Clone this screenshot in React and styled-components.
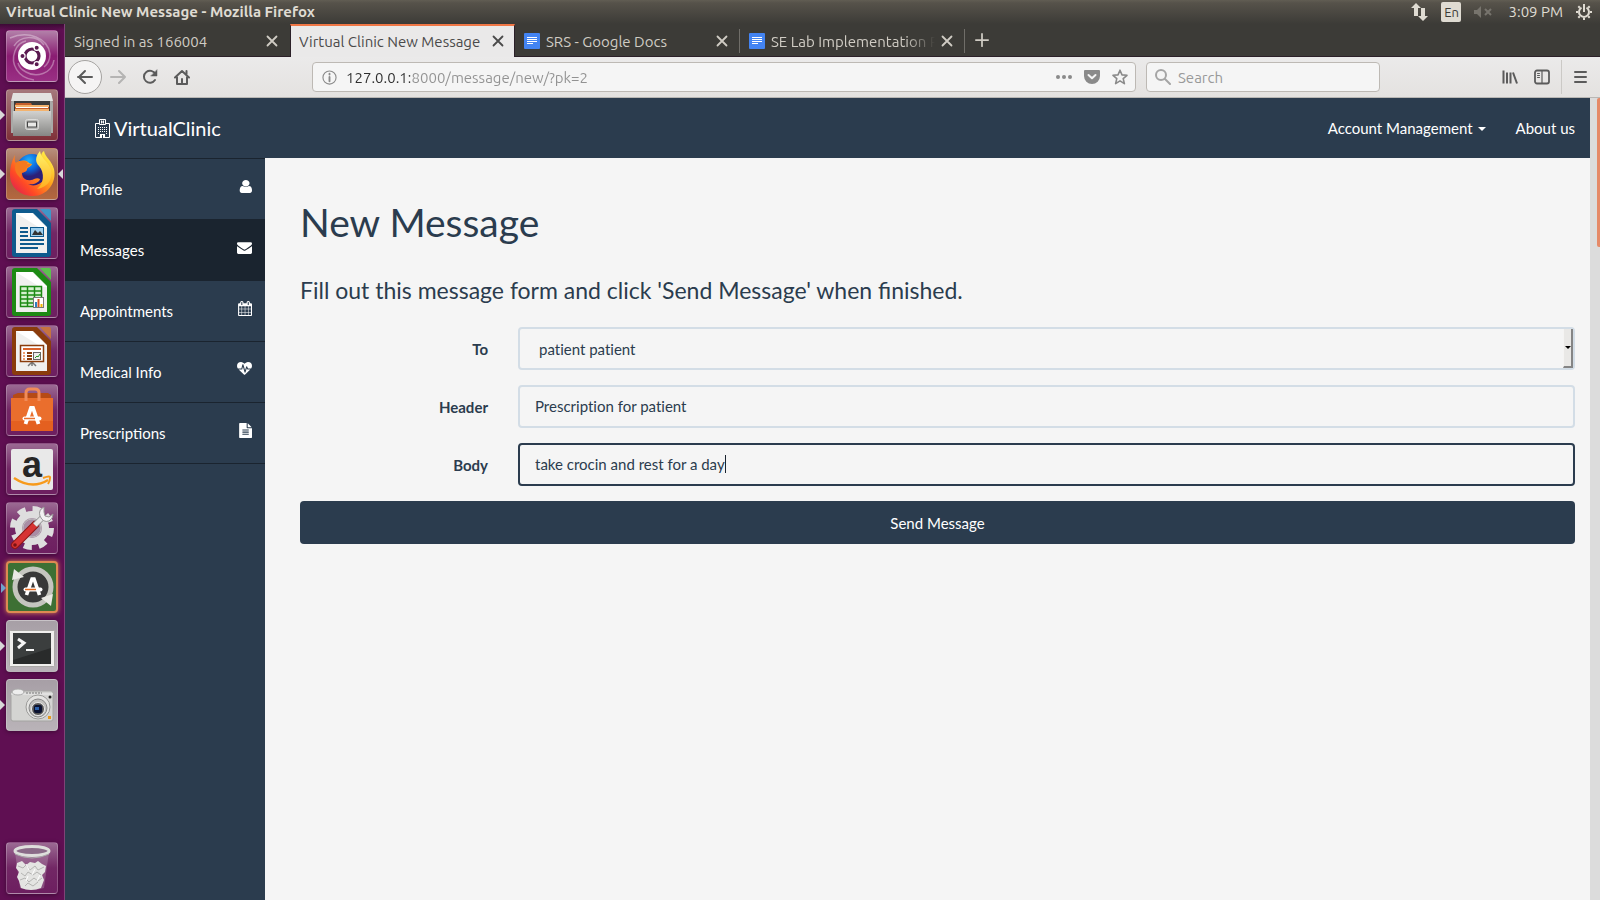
import React from "react";
import styled, { createGlobalStyle, css } from "styled-components";

const navy = "#2b3c4e";
const uiFont = `Ubuntu, "Noto Sans", sans-serif`;
const webFont = `Lato, "Liberation Sans", sans-serif`;

const GlobalStyle = createGlobalStyle`
  *, *::before, *::after { box-sizing: border-box; }
  body { margin: 0; background: #f5f5f5; font-family: ${uiFont}; }
  button, input, select { font: inherit; color: inherit; margin: 0; }
  svg { display: block; flex: none; }
`;

const Desktop = styled.div`
  min-height: 100vh;
  display: flex;
  flex-direction: column;
`;

/* Top panel */
const Panel = styled.header`
  height: 24px;
  flex: none;
  display: flex;
  align-items: center;
  justify-content: space-between;
  padding: 0 8px 0 6px;
  background: linear-gradient(#615d53, #56524a 3px, #3c3b37);
  color: #dfdbd2;
`;
const PanelTitle = styled.div`
  font-size: 15px;
  font-weight: 700;
  line-height: 24px;
  white-space: nowrap;
`;
const Indicators = styled.div`
  display: flex;
  align-items: center;
  font-size: 15px;
  line-height: 24px;
`;
const Language = styled.span`
  width: 20px;
  height: 20px;
  margin: 0 13px 0 13px;
  border-radius: 2px;
  background: #dfdbd2;
  color: #3c3b37;
  font-size: 13px;
  line-height: 20px;
  text-align: center;
`;
const Clock = styled.time`
  margin: 0 13px 0 16px;
`;

const Workspace = styled.div`
  flex: 1;
  display: flex;
`;

/* Launcher */
const Launcher = styled.nav`
  width: 65px;
  flex: none;
  display: flex;
  flex-direction: column;
  gap: 7px;
  padding: 6px 6px;
  background: linear-gradient(#3c0a35, #5f0f52 6px, #5f0f52);
  border-right: 1px solid #7f4377;
`;
const Tile = styled.button`
  position: relative;
  width: 52px;
  height: 52px;
  flex: none;
  padding: 0;
  border: 1px solid rgba(255, 255, 255, 0.22);
  border-radius: 4px;
  background: ${(p) => p.$bg || "linear-gradient(#9b6a93, #722765 50%, #6d1f60)"};
  box-shadow: 0 1px 4px rgba(0, 0, 0, 0.35);
  ${(p) => p.$last && css`margin-top: auto;`}
  ${(p) =>
    p.$glow &&
    css`
      border: 2px solid #dd8a52;
      box-shadow: 0 0 5px #e08a50;
    `}
  & > svg {
    position: absolute;
    inset: ${(p) => (p.$glow ? "-2px" : "-1px")};
  }
`;
const Pip = styled.span`
  position: absolute;
  top: 20px;
  ${(p) => (p.$right ? "right: -6px;" : "left: -7px;")}
  border: 5px solid transparent;
  ${(p) =>
    p.$right
      ? "border-left-width: 0; border-right-color: #d8d8d8;"
      : `border-right-width: 0; border-left-color: ${p.$blue ? "#6fa3cc" : "#d8d8d8"};`}
`;

/* Browser */
const Browser = styled.div`
  flex: 1;
  min-width: 0;
  display: flex;
  flex-direction: column;
`;
const TabStrip = styled.div`
  height: 33px;
  flex: none;
  display: flex;
  align-items: stretch;
  background: #3c3b37;
  border-bottom: 1px solid #2b2028;
`;
const Tab = styled.div`
  width: 225px;
  position: relative;
  display: flex;
  align-items: center;
  gap: 6px;
  padding: 2px 12px 0 9px;
  color: #d0ccc4;
  ${(p) =>
    p.$active &&
    css`
      margin-bottom: -1px;
      padding: 0 10px 1px 8px;
      border-top: 2px solid #f07746;
      border-left: 1px solid #2b2028;
      border-right: 1px solid #2b2028;
      background: #eae9e9;
      color: #4a4a4a;
    `}
  ${(p) =>
    p.$divided &&
    css`
      &::after {
        content: "";
        position: absolute;
        right: 0;
        top: 5px;
        bottom: 3px;
        width: 1px;
        background: #706e69;
      }
    `}
`;
const TabLabel = styled.span`
  flex: 1;
  min-width: 0;
  overflow: hidden;
  white-space: nowrap;
  font-size: 15px;
  line-height: 21px;
  ${(p) =>
    p.$fade &&
    css`
      mask-image: linear-gradient(to right, #000 calc(100% - 30px), transparent);
    `}
`;
const IconButton = styled.button`
  display: flex;
  align-items: center;
  justify-content: center;
  width: ${(p) => p.$w || 32}px;
  height: ${(p) => p.$h || 32}px;
  flex: none;
  padding: 0;
  border: 0;
  background: none;
  color: ${(p) => p.$color || "inherit"};
  ${(p) =>
    p.$round &&
    css`
      border: 1px solid #a5a3a1;
      border-radius: 50%;
      background: #f5f4f4;
    `}
`;
const Toolbar = styled.div`
  height: 41px;
  flex: none;
  display: flex;
  align-items: center;
  padding: 0 4px 0 3px;
  background: linear-gradient(#ebeaea, #e4e2e0);
  border-bottom: 1px solid #b9b7b4;
  color: #5b5b5b;
`;
const Field = styled.label`
  height: 30px;
  display: flex;
  align-items: center;
  border: 1px solid #bdb9b4;
  border-radius: 4px;
  background: #f5f5f5;
  color: #8a8a8a;
`;
const UrlField = styled(Field)`
  flex: 1;
  margin-left: 114px;
  padding: 0 1px 0 9px;
`;
const SearchField = styled(Field)`
  width: 234px;
  margin: 0 114px 0 10px;
  padding: 0 8px;
  gap: 7px;
`;
const BareInput = styled.input`
  flex: 1;
  min-width: 0;
  padding: 0;
  border: 0;
  outline: 0;
  background: none;
  font-size: 15px;
  line-height: 21px;
  &::placeholder { color: #999; opacity: 1; }
`;
const UrlInput = styled(BareInput)`
  margin-left: 9px;
  color: transparent;
  background: linear-gradient(to right, #2e2e2e 64px, #929292 64px);
  background-clip: text;
  -webkit-background-clip: text;
`;
const ToolDivider = styled.span`
  width: 1px;
  height: 34px;
  margin: 0 2px 0 3px;
  background: #cbc9c6;
`;

/* Web page */
const Viewport = styled.div`
  flex: 1;
  display: flex;
`;
const Scrollbar = styled.div`
  width: 10px;
  flex: none;
  padding-left: 7px;
  background: #dcdcdc;
  &::before {
    content: "";
    display: block;
    height: 149px;
    background: #e58a68;
    border-radius: 2px 0 0 2px;
  }
`;
const Page = styled.div`
  flex: 1;
  min-width: 0;
  display: flex;
  flex-direction: column;
  background: #f5f5f5;
  color: ${navy};
  font-family: ${webFont};
  font-size: 15px;
  line-height: 21px;
`;
const Navbar = styled.nav`
  height: 60px;
  flex: none;
  display: flex;
  align-items: center;
  padding: 0 15px 0 30px;
  background: ${navy};
  color: #fff;
`;
const Brand = styled.a`
  display: flex;
  align-items: center;
  gap: 4px;
  margin-right: auto;
  color: inherit;
  text-decoration: none;
  font-size: 20px;
`;
const NavLink = styled.a`
  display: flex;
  align-items: center;
  gap: 5px;
  margin-left: 30px;
  color: inherit;
  text-decoration: none;
`;
const Caret = styled.span`
  border: 4px solid transparent;
  border-top-color: currentColor;
  border-bottom: 0;
  margin-top: 2px;
`;
const Columns = styled.div`
  flex: 1;
  display: flex;
`;
const Sidebar = styled.aside`
  width: 200px;
  flex: none;
  background: ${navy};
  border-top: 1px solid #1a242f;
`;
const SideLink = styled.a`
  display: flex;
  align-items: center;
  justify-content: space-between;
  height: 61px;
  padding: 0 13px 0 15px;
  border-bottom: 1px solid #1a242f;
  background: ${(p) => (p.$active ? "#1a242f" : "transparent")};
  color: #fff;
  text-decoration: none;
  & svg { margin-bottom: 5px; }
`;
const Main = styled.main`
  flex: 1;
  min-width: 0;
  padding: 42px 15px 42px 35px;
`;
const Title = styled.h1`
  margin: 0 0 33px;
  font-size: 39px;
  font-weight: 400;
  line-height: 44px;
`;
const Lead = styled.h2`
  margin: 0 0 24px;
  font-size: 23px;
  font-weight: 400;
  line-height: 26px;
`;
const Form = styled.form`
  display: grid;
  gap: 15px;
`;
const Row = styled.div`
  display: grid;
  grid-template-columns: 188px 1fr;
  column-gap: 30px;
  align-items: center;
`;
const RowLabel = styled.label`
  padding-top: 2px;
  text-align: right;
  font-weight: 700;
`;
const Control = styled.div`
  position: relative;
`;
const boxed = css`
  display: block;
  width: 100%;
  height: 43px;
  border: 2px solid ${(p) => (p.$focused ? navy : "#d3dde6")};
  border-radius: 4px;
  outline: 0;
  background: #f5f5f5;
  font-size: 15px;
  line-height: 21px;
  font-variant-ligatures: none;
`;
const TextBox = styled.input`
  ${boxed}
  padding: 8px 15px 10px;
`;
const Select = styled.select`
  ${boxed}
  appearance: none;
  padding: 10px 19px 8px;
`;
const SelectArrow = styled.span`
  position: absolute;
  top: 2px;
  right: 2px;
  bottom: 2px;
  width: 10px;
  display: flex;
  align-items: center;
  justify-content: center;
  border-right: 2px solid #858585;
  border-bottom: 2px solid #858585;
  border-left: 1px solid #f5f4f3;
  background: #e9e8e6;
  pointer-events: none;
  &::before {
    content: "";
    border: 3px solid transparent;
    border-top-color: #000;
    border-bottom: 0;
  }
`;
const TextCursor = styled.span`
  position: absolute;
  top: 12px;
  left: 207px;
  width: 1px;
  height: 18px;
  background: #1a242f;
`;
const Submit = styled.button`
  height: 43px;
  padding: 2px 15px 0;
  border: 0;
  border-radius: 4px;
  background: ${navy};
  color: #fff;
`;

/* Icons */
const Line = ({ size = 16, w = 2, children, ...rest }) => (
  <svg width={size} height={size} viewBox="0 0 16 16" fill="none" stroke="currentColor" strokeWidth={w} strokeLinecap="round" strokeLinejoin="round" aria-hidden="true" {...rest}>
    {children}
  </svg>
);
const CloseIcon = () => (
  <Line size={12} w={2.4}><path d="M2 2l12 12M14 2L2 14" /></Line>
);
const DocsIcon = () => (
  <svg width="16" height="16" viewBox="0 0 16 16" aria-hidden="true">
    <rect width="16" height="16" rx="1" fill="#4384f3" />
    <path d="M3 4.5h10M3 6.5h10M3 8.5h10M3 10.5h6" stroke="#fff" />
  </svg>
);

const glyphs = {
  user: ["-25 0 1561 1792", "M1536 1399q0 109-62.5 187t-150.5 78h-854q-88 0-150.5-78t-62.5-187q0-85 8.5-160.5t31.5-152 58.5-131 94-89 134.5-34.5q131 128 313 128t313-128q76 0 134.5 34.5t94 89 58.5 131 31.5 152 8.5 160.5zm-256-887q0 159-112.5 271.5t-271.5 112.5-271.5-112.5-112.5-271.5 112.5-271.5 271.5-112.5 271.5 112.5 112.5 271.5z"],
  envelope: ["0 0 1792 1792", "M1792 710v794q0 66-47 113t-113 47h-1472q-66 0-113-47t-47-113v-794q44 49 101 87 362 246 497 345 57 42 92.5 65.5t94.5 48 110 24.5h2q51 0 110-24.5t94.5-48 92.5-65.5q170-123 498-345 57-39 100-87zm0-294q0 79-49 151t-122 123q-376 261-468 325-10 7-42.5 31t-54 38.5-52 32.5-57.5 27-50 9h-2q-23 0-50-9t-57.5-27-52-32.5-54-38.5-42.5-31q-91-64-262-182.5t-205-142.5q-62-42-117-115.5t-55-136.5q0-78 41.5-130t118.5-52h1472q65 0 112.5 47t47.5 113z"],
  calendar: ["-64 0 1792 1792", "M192 1664h288v-288h-288v288zm352 0h320v-288h-320v288zm-352-352h288v-320h-288v320zm352 0h320v-320h-320v320zm-352-384h288v-288h-288v288zm736 736h320v-288h-320v288zm-384-736h320v-288h-320v288zm768 736h288v-288h-288v288zm-384-352h320v-320h-320v320zm-352-864v-288q0-13-9.5-22.5t-22.5-9.5h-64q-13 0-22.5 9.5t-9.5 22.5v288q0 13 9.5 22.5t22.5 9.5h64q13 0 22.5-9.5t9.5-22.5zm736 864h288v-320h-288v320zm-384-384h320v-288h-320v288zm384 0h288v-288h-288v288zm32-480v-288q0-13-9.5-22.5t-22.5-9.5h-64q-13 0-22.5 9.5t-9.5 22.5v288q0 13 9.5 22.5t22.5 9.5h64q13 0 22.5-9.5t9.5-22.5zm384-64v1280q0 52-38 90t-90 38h-1408q-52 0-90-38t-38-90v-1280q0-52 38-90t90-38h128v-96q0-66 47-113t113-47h64q66 0 113 47t47 113v96h384v-96q0-66 47-113t113-47h64q66 0 113 47t47 113v96h128q52 0 90 38t38 90z"],
  heartbeat: ["0 0 1792 1792", "M1280 896h305q-5 6-10 10.5t-9 7.5l-3 4-623 600q-18 18-44 18t-44-18l-624-602q-5-2-21-20h369q22 0 39.5-13.5t22.5-34.5l70-281 190 667q6 20 23 33t39 13q21 0 38-13t23-33l146-485 56 112q18 35 57 35zm512-428q0 145-103 300h-369l-111-221q-8-17-25.5-27t-36.5-8q-45 5-56 46l-129 430-196-686q-6-20-23.5-33t-39.5-13-39 13.5-22 34.5l-116 464h-423q-103-155-103-300 0-220 127-344t351-124q62 0 126.5 21.5t120 58 95.5 68.5 76 68q36-36 76-68t95.5-68.5 120-58 126.5-21.5q224 0 351 124t127 344z"],
  file: ["-128 0 1792 1792", "M1596 476q14 14 28 36h-472v-472q22 14 36 28zm-476 164h544v1056q0 40-28 68t-68 28h-1344q-40 0-68-28t-28-68v-1600q0-40 28-68t68-28h800v544q0 40 28 68t68 28zm160 736v-64q0-14-9-23t-23-9h-704q-14 0-23 9t-9 23v64q0 14 9 23t23 9h704q14 0 23-9t9-23zm0-256v-64q0-14-9-23t-23-9h-704q-14 0-23 9t-9 23v64q0 14 9 23t23 9h704q14 0 23-9t9-23zm0-256v-64q0-14-9-23t-23-9h-704q-14 0-23 9t-9 23v64q0 14 9 23t23 9h704q14 0 23-9t9-23z"],
};
const Glyph = ({ name }) => (
  <svg width="15" height="15" viewBox={glyphs[name][0]} preserveAspectRatio="none" fill="currentColor" aria-hidden="true">
    <path d={glyphs[name][1]} />
  </svg>
);
const HospitalIcon = () => (
  <svg width="15" height="19" viewBox="0 0 15 19" fill="none" stroke="#fff" aria-hidden="true">
    <path d="M4.5 4.5h-4v14h14v-14h-4" />
    <path d="M4.5 5.500V.5h6v5z" />
    <path d="M6.500 1.500v3M8.500 1.500v3M6.500 3h2" />
    <path d="M3 8.500h9M3 10.500h9M3 12.500h9" strokeDasharray="1 1" />
    <path d="M3 14.500h1M11 14.500h1" />
    <path d="M5 19v-4h5v4z" fill="#fff" stroke="none" />
    <path d="M7 16h1v3H7z" fill={navy} stroke="none" />
  </svg>
);

const Art = ({ children }) => (
  <svg width="52" height="52" viewBox="0 0 52 52" aria-hidden="true">{children}</svg>
);
const UbuntuArt = () => (
  <Art>
    <g fill="none" stroke="#fff" strokeOpacity=".35" strokeWidth="1.5">
      <path d="M4 8c18-8 38 0 40 16 0 6-2 10-6 13" />
      <path d="M48 30C46 44 30 48 20 42c-4-2-7-5-8-9" />
      <path d="M28 50C12 48 4 34 9 21c2-5 6-9 11-10" />
      <path d="M8 16C14 6 30 4 38 15" />
    </g>
    <circle cx="26" cy="26" r="14" fill="#fff" />
    <circle cx="26" cy="26" r="7" fill="none" stroke="#5a1a50" strokeWidth="3.200" />
    <g stroke="#fff" strokeWidth="1.200" fill="#5a1a50">
      <circle cx="16.500" cy="26" r="2.600" /><circle cx="30.700" cy="17.800" r="2.600" /><circle cx="30.700" cy="34.200" r="2.600" />
    </g>
  </Art>
);
const FilesArt = () => (
  <Art>
    <defs><linearGradient id="cab" x2="0" y2="1"><stop stopColor="#d2d2d0" /><stop offset="1" stopColor="#868684" /></linearGradient></defs>
    <path d="M7 5h38l2 9v30H5V14z" fill="#a9a9a7" />
    <path d="M7 4h38l2 8H5z" fill="#e2e2e0" />
    <path d="M8 12h36v10H8z" fill="#3b3b3b" />
    <path d="M10 14h15l1 2h17v6H9v-6z" fill="#c65f2c" />
    <path d="M9 17h34M9 21h34" stroke="#f3b36e" strokeWidth="2" />
    <path d="M10 18.500h32" stroke="#fff" />
    <path d="M7 22h38v25H7z" fill="url(#cab)" />
    <rect x="19.500" y="30.500" width="13" height="10" rx="2" fill="#b8b8b6" stroke="#dcdcda" />
    <rect x="21.500" y="33" width="9" height="5" fill="#e9e9e7" stroke="#444" />
  </Art>
);
const FirefoxArt = () => (
  <Art>
    <defs>
      <linearGradient id="fx" x1="1" x2="0" y1="0" y2="1"><stop offset=".1" stopColor="#fff24a" /><stop offset=".4" stopColor="#ffa51c" /><stop offset=".7" stopColor="#ff4a25" /><stop offset="1" stopColor="#d5125f" /></linearGradient>
      <radialGradient id="globe" cx=".4" cy=".2"><stop stopColor="#1fb0ff" /><stop offset=".6" stopColor="#0a62d8" /><stop offset="1" stopColor="#2b1f78" /></radialGradient>
      <linearGradient id="fxt" x2="0" y2="1"><stop stopColor="#fff36a" /><stop offset="1" stopColor="#ffb01e" /></linearGradient>
    </defs>
    <circle cx="26" cy="22" r="16" fill="url(#globe)" />
    <path d="M9 7c-1 4 0 7 1 8 4-3 9-3 12-1 1 1 3 2 4 2-1 3-4 3-5 5 0 3-3 3-5 4 0 5 4 8 9 7 3 0 5-3 9-1-1 4-7 6-12 5 7 4 17-1 18-10 1-8-5-11-5-17 0-3 1-5 3-6 1 6 8 10 10 18 3 14-7 27-21 27C14 48 4 39 4 27 4 17 7 11 9 7z" fill="url(#fx)" />
    <path d="M34 3c-5 6-5 11-1 15 6 7 5 18-2 23 12-2 16-11 14-19-2-8-10-11-11-19z" fill="url(#fxt)" />
    <path d="M10 15c4-3 9-2 12-1-2 3-1 2 3 2-1 3-5 3-6 6-3 1-5 4-3 9-5-3-9-10-6-16z" fill="#f4791f" />
  </Art>
);
const OfficeArt = ({ color, light, children }) => (
  <Art>
    <path d="M9 2h19l17 17v28q0 3-3 3H9q-3 0-3-3V5q0-3 3-3z" fill={color} />
    <path d="M10 6h17l14 14v26H10z" fill="#f0f0ef" />
    <path d="M10 6h16l15 15h-7z" fill="#fff" />
    <path d="M34 2h9q2 0 2 2v10z" fill={light} />
    <path d="M27 2h4l14 14v5z" fill={color} />
    {children}
  </Art>
);
const WriterArt = () => (
  <OfficeArt color="#0e5a8d" light="#3f96c8">
    <path d="M14 21h8M14 25h8M14 29h8M14 33h24M14 37h24M14 41h18" stroke="#0e5a8d" strokeWidth="2" />
    <rect x="24.500" y="20.500" width="13" height="9" fill="#9fd0ee" stroke="#0e5a8d" />
    <path d="M26 28l3-5 3 3 2-2 3 4z" fill="#333" />
  </OfficeArt>
);
const CalcArt = () => (
  <OfficeArt color="#1d8a14" light="#5dc14f">
    <rect x="14" y="20" width="22" height="21" fill="#d6f0cf" />
    <path d="M14.500 20.500h21v20h-21zM14 25h22M14 29h22M14 33h22M14 37h22M21.500 20v21M28.500 20v21" fill="none" stroke="#1d8a14" strokeWidth="1.500" />
    <rect x="27.500" y="31.500" width="10" height="10" fill="#fff" stroke="#777" />
    <path d="M30 41v-5" stroke="#2d7ec0" strokeWidth="2" /><path d="M32.500 41v-8" stroke="#d9541e" strokeWidth="2" /><path d="M35.500 41v-3" stroke="#f0b400" strokeWidth="2" />
  </OfficeArt>
);
const ImpressArt = () => (
  <OfficeArt color="#8a3c0c" light="#c57340">
    <path d="M22 41l4-4 4 4M26 37v4" stroke="#777" strokeWidth="1.500" fill="none" />
    <rect x="14.500" y="20.500" width="23" height="16" fill="#fff" stroke="#8a3c0c" strokeWidth="1.500" />
    <path d="M17 24h18" stroke="#d9622b" strokeWidth="2" />
    <path d="M17 28h2M17 31h2M17 34h2" stroke="#f0a070" strokeWidth="2" /><path d="M21 28h5M21 31h5M21 34h5" stroke="#8a3c0c" strokeWidth="2" />
    <rect x="27.500" y="27.500" width="7" height="7" fill="#eee" stroke="#666" /><path d="M29 33l2-2 1 1 2-3" stroke="#279a27" fill="none" />
  </OfficeArt>
);
const BagArt = () => (
  <Art>
    <path d="M7 11l5-2h30l3 2v3H7z" fill="#b64a15" />
    <path d="M5 14h42v33H5z" fill="#ea6e2d" /><path d="M5 37h42v10H5z" fill="#e46020" />
    <path d="M20 17V9q0-4 4-4h5q4 0 4 4v8" fill="none" stroke="#f08b5a" strokeWidth="3" />
    <path d="M19.500 40l5.500-16h2l5.500 16" fill="none" stroke="#fff" strokeWidth="3.800" />
    <path d="M18.500 34.500h15" stroke="#fff" strokeWidth="4" strokeLinecap="round" /><path d="M18 34.500h11" stroke="#ea6e2d" strokeWidth="1.500" />
  </Art>
);
const AmazonArt = () => (
  <Art>
    <rect x="5" y="6" width="42" height="41" rx="2" fill="#e9e9e9" />
    <text x="26" y="34" textAnchor="middle" fontFamily="Liberation Sans, sans-serif" fontWeight="700" fontSize="36" fill="#262626">a</text>
    <path d="M8 35q18 12 34 2" fill="none" stroke="#f79a1c" strokeWidth="2.500" /><path d="M37 35q8-3 7 0 0 3-2 6" fill="none" stroke="#f79a1c" strokeWidth="2" />
  </Art>
);
const SettingsArt = () => (
  <Art>
    <circle cx="26" cy="26" r="19" fill="none" stroke="#dedede" strokeWidth="6" strokeDasharray="8 6.920" />
    <circle cx="26" cy="26" r="13.500" fill="#a98da5" stroke="#dedede" strokeWidth="7" />
    <circle cx="26" cy="26" r="9" fill="none" stroke="#bcbcbc" />
    <path d="M9 43l20-20" stroke="#8e1616" strokeWidth="8" strokeLinecap="round" />
    <path d="M9 43l20-20" stroke="#d63333" strokeWidth="6" strokeLinecap="round" />
    <path d="M29 23l8-8" stroke="#8f8f8f" strokeWidth="6" />
    <path d="M29 23l8-8" stroke="#e6e6e6" strokeWidth="4.500" />
    <path d="M38 5q-6 3-4 9 3 7 9 5 4-2 4-7l-4 3-4-1-1-4z" fill="#f2f2f2" stroke="#979797" />
    <circle cx="9" cy="43" r="1.800" fill="#7a1212" />
  </Art>
);
const UpdaterArt = () => (
  <Art>
    <circle cx="27" cy="26" r="16" fill="#383838" />
    <circle cx="27" cy="26" r="18" fill="none" stroke="#c5c5bf" strokeWidth="5" />
    <path d="M6 19l2-11 10 8zM47 33l-2 12-10-8z" fill="#e9e9e4" />
    <path d="M20.500 34l5.500-16h2l5.500 16" fill="none" stroke="#fff" strokeWidth="3.600" />
    <path d="M19.500 28.500h15" stroke="#fff" strokeWidth="4" strokeLinecap="round" /><path d="M19 28.500h11" stroke="#e56a20" strokeWidth="1.500" />
  </Art>
);
const TerminalArt = () => (
  <Art>
    <rect x="3.500" y="10.500" width="45" height="36" rx="1" fill="#f0efed" stroke="#aaa8a6" />
    <rect x="7" y="13" width="38" height="31" fill="#292b2b" />
    <path d="M7 13h38v15L7 40z" fill="#3b3e3e" />
    <path d="M12 19l6 4-6 5" fill="none" stroke="#f5f5f5" strokeWidth="3" /><path d="M20 30h8" stroke="#f5f5f5" strokeWidth="2" />
  </Art>
);
const CameraArt = () => (
  <Art>
    <rect x="5" y="12" width="42" height="30" rx="2" fill="#d4d4d2" stroke="#a4a4a2" />
    <path d="M5 15h42" stroke="#eee" /><path d="M20 14h16" stroke="#777" strokeDasharray="2 1" />
    <ellipse cx="12" cy="13" rx="6" ry="3" fill="#eee" stroke="#aaa" />
    <circle cx="32" cy="28" r="12" fill="#e4e4e2" stroke="#9b9b99" /><circle cx="32" cy="29" r="9" fill="#c2c2c0" stroke="#888" />
    <circle cx="32" cy="30" r="6.500" fill="#555" stroke="#eee" /><rect x="28" y="26" width="8" height="8" rx="2" fill="#0a1230" /><rect x="29" y="28" width="4" height="3" fill="#2b5fa8" />
    <circle cx="44" cy="18" r="1.500" fill="#222" /><rect x="42" y="37" width="3" height="3" fill="#e89a1c" />
  </Art>
);
const TrashArt = () => (
  <Art>
    <path d="M9 10h34l-5 36q-12 4-24 0z" fill="#c9b5c8" fillOpacity=".3" />
    <path d="M11 21l5-2 4 4 4-3 5 1 3-2 4 3 4 2-1 6-3 3 2 5-3 8q-10 4-20 0l-2-7-2-4 2-5-3-4z" fill="#e4e4e2" />
    <path d="M12 24l5 2 3-3 4 5 5-4 3 4 6-3M15 31l4 3 3-4 5 3 4-3 4 3M14 38l5-2 4 4 5-4 4 3 4-3M19 44l3-3 5 3 5-4" fill="none" stroke="#b4b4b2" />
    <path d="M20 22l3 6M29 27l-3 6M34 33l-3 6M22 34l-2 5" stroke="#fff" />
    <ellipse cx="26" cy="9" rx="17" ry="4.500" fill="#8a6a88" stroke="#dededc" strokeWidth="3" />
    <path d="M9 12q17 8 34 0" fill="none" stroke="#aaa" />
  </Art>
);

const warm = "linear-gradient(#b78f7c, #9c5a3e 50%, #b4683f)";
const gray = "linear-gradient(#a79fa6, #b9b3b8)";
const apps = [
  { name: "Dash", art: UbuntuArt, bg: "linear-gradient(#b280a9, #8a1c72 50%, #9a2f84)" },
  { name: "Files", art: FilesArt, bg: "linear-gradient(#a5787c, #7f3038)", left: true },
  { name: "Firefox", art: FirefoxArt, bg: warm, left: true, right: true },
  { name: "Writer", art: WriterArt },
  { name: "Calc", art: CalcArt },
  { name: "Impress", art: ImpressArt },
  { name: "Software", art: BagArt },
  { name: "Amazon", art: AmazonArt },
  { name: "System Settings", art: SettingsArt },
  { name: "Software Updater", art: UpdaterArt, bg: "#3d7034", left: true, blue: true, glow: true },
  { name: "Terminal", art: TerminalArt, bg: gray, left: true },
  { name: "Screenshot", art: CameraArt, bg: gray, left: true },
  { name: "Trash", art: TrashArt, last: true },
];
const tabs = [
  { label: "Signed in as 166004" },
  { label: "Virtual Clinic New Message", active: true },
  { label: "SRS - Google Docs", docs: true, divided: true },
  { label: "SE Lab Implementation P", docs: true, divided: true, fade: true },
];
const sections = [
  ["Profile", "user"],
  ["Messages", "envelope"],
  ["Appointments", "calendar"],
  ["Medical Info", "heartbeat"],
  ["Prescriptions", "file"],
];

export default function App() {
  return (
    <Desktop>
      <GlobalStyle />
      <Panel>
        <PanelTitle>Virtual Clinic New Message - Mozilla Firefox</PanelTitle>
        <Indicators>
          <svg width="17" height="18" viewBox="0 0 17 18" fill="currentColor" aria-hidden="true">
            <path d="M5 0l5 5H7v8H3V5H0zM12 18l5-5h-3V5h-4v8H7z" />
          </svg>
          <Language>En</Language>
          <svg width="18" height="12" viewBox="0 0 18 12" fill="#77746d" aria-hidden="true">
            <path d="M0 4h3l4-4v12L3 8H0z" /><path d="M11 3l6 6M17 3l-6 6" stroke="#77746d" strokeWidth="2" />
          </svg>
          <Clock>3:09 PM</Clock>
          <svg width="16" height="16" viewBox="0 0 16 16" fill="none" stroke="currentColor" aria-hidden="true">
            <path d="M5.500 3.600a5 5 0 1 0 5 0" strokeWidth="2" /><path d="M8 0v8" strokeWidth="2" />
            <path d="M0 8h2M14 8h2M8 14v2M2.300 2.300l1.500 1.500M13.700 2.300l-1.500 1.500M2.300 13.700l1.500-1.500M13.700 13.700l-1.500-1.500" strokeWidth="2" />
          </svg>
        </Indicators>
      </Panel>
      <Workspace>
        <Launcher aria-label="Launcher">
          {apps.map(({ name, art: AppArt, bg, left, right, blue, glow, last }) => (
            <Tile key={name} aria-label={name} $bg={bg} $glow={glow} $last={last}>
              <AppArt />
              {left && <Pip $blue={blue} />}
              {right && <Pip $right />}
            </Tile>
          ))}
        </Launcher>
        <Browser>
          <TabStrip>
            {tabs.map((t) => (
              <Tab key={t.label} $active={t.active} $divided={t.divided}>
                {t.docs && <DocsIcon />}
                <TabLabel $fade={t.fade}>{t.label}</TabLabel>
                <IconButton $w={12} $h={20} aria-label="Close tab"><CloseIcon /></IconButton>
              </Tab>
            ))}
            <IconButton $w={34} $color="#d0ccc4" aria-label="New tab">
              <Line size={14} w={2}><path d="M8 1v14M1 8h14" /></Line>
            </IconButton>
          </TabStrip>
          <Toolbar>
            <IconButton $w={34} $h={34} $round aria-label="Back"><Line w={2}><path d="M15 8H1M8 2L2 8l6 6" /></Line></IconButton>
            <IconButton $color="#b5b4b3" aria-label="Forward"><Line w={2}><path d="M1 8h14M9 2l6 6-6 6" /></Line></IconButton>
            <IconButton aria-label="Reload"><Line w={2}><path d="M13 11a6 6 0 1 1 .3-6" /><path d="M15 1v6H9z" fill="currentColor" strokeWidth="0.500" /></Line></IconButton>
            <IconButton aria-label="Home"><Line w={2}><path d="M1 8.500L8 2l7 6.500M3 8v7h10V8M12.500 2v3" /><path d="M8 13.500v-3.500" /></Line></IconButton>
            <UrlField>
              <Line size={15} w={1.200}><circle cx="8" cy="8" r="7" /><path d="M8 7.500V12M8 4v.8" strokeWidth="2" /></Line>
              <UrlInput aria-label="Address" defaultValue="127.0.0.1:8000/message/new/?pk=2" />
              <IconButton $w={28} $h={28} aria-label="Page actions"><svg width="16" height="4" viewBox="0 0 16 4" fill="currentColor"><circle cx="2" cy="2" r="2" /><circle cx="8" cy="2" r="2" /><circle cx="14" cy="2" r="2" /></svg></IconButton>
              <IconButton $w={28} $h={28} aria-label="Save to Pocket"><Line><path d="M1 2h14v5a7 7 0 0 1-14 0z" fill="currentColor" /><path d="M4.500 6L8 9.300 11.500 6" stroke="#f5f5f5" /></Line></IconButton>
              <IconButton $w={28} $h={28} aria-label="Bookmark"><Line w={1.600}><path d="M8 1.200l2 4.700 5 .4-3.800 3.300 1.200 5L8 11.900l-4.400 2.700 1.200-5L1 6.300l5-.4z" /></Line></IconButton>
            </UrlField>
            <SearchField>
              <Line w={2} color="#a5a5a5"><circle cx="6" cy="6" r="5" /><path d="M10 10l5 5" /></Line>
              <BareInput placeholder="Search" aria-label="Search" />
            </SearchField>
            <IconButton aria-label="Library"><Line w={2}><path d="M1.500 1.500v13M5 3.500v11M8.500 3.500v11M11 3.500l4 11" strokeLinecap="butt" /></Line></IconButton>
            <IconButton aria-label="Sidebars"><Line w={1.800}><rect x="1" y="1.500" width="14" height="13" rx="2" /><path d="M8 2v12" strokeWidth="1.200" /><path d="M3.500 4.500h2M3.500 6.500h2M3.500 8.500h2" strokeWidth="1" /></Line></IconButton>
            <ToolDivider />
            <IconButton aria-label="Menu"><Line w={2}><path d="M3 3h11M3 8h11M3 13h11" /></Line></IconButton>
          </Toolbar>
          <Viewport>
            <Page>
              <Navbar>
                <Brand href="#home"><HospitalIcon />VirtualClinic</Brand>
                <NavLink href="#account">Account Management<Caret /></NavLink>
                <NavLink href="#about">About us</NavLink>
              </Navbar>
              <Columns>
                <Sidebar>
                  {sections.map(([label, icon]) => (
                    <SideLink key={label} href={`#${icon}`} $active={label === "Messages"}>
                      {label}
                      <Glyph name={icon} />
                    </SideLink>
                  ))}
                </Sidebar>
                <Main>
                  <Title>New Message</Title>
                  <Lead>Fill out this message form and click 'Send Message' when finished.</Lead>
                  <Form onSubmit={(e) => e.preventDefault()}>
                    <Row>
                      <RowLabel htmlFor="to">To</RowLabel>
                      <Control>
                        <Select id="to"><option>patient patient</option></Select>
                        <SelectArrow />
                      </Control>
                    </Row>
                    <Row>
                      <RowLabel htmlFor="header">Header</RowLabel>
                      <Control><TextBox id="header" defaultValue="Prescription for patient" /></Control>
                    </Row>
                    <Row>
                      <RowLabel htmlFor="body">Body</RowLabel>
                      <Control>
                        <TextBox id="body" $focused defaultValue="take crocin and rest for a day" />
                        <TextCursor />
                      </Control>
                    </Row>
                    <Submit type="submit">Send Message</Submit>
                  </Form>
                </Main>
              </Columns>
            </Page>
            <Scrollbar />
          </Viewport>
        </Browser>
      </Workspace>
    </Desktop>
  );
}
